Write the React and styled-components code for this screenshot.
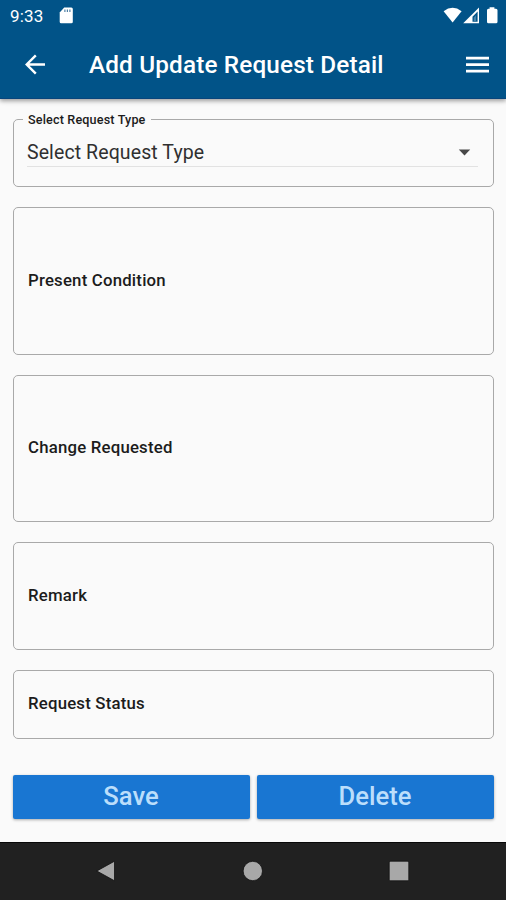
import React from "react";
import styled, { createGlobalStyle } from "styled-components";

const GlobalStyle = createGlobalStyle`
  * { box-sizing: border-box; }
  body { margin: 0; background: #fafafa; font-family: Roboto, "Liberation Sans", sans-serif; }
`;

const Screen = styled.div`
  display: flex;
  flex-direction: column;
  width: 506px;
  height: 900px;
  background: #fafafa;
  overflow: hidden;
`;

const Header = styled.header`
  flex: none;
  height: 99px;
  background: #015388;
  color: #fff;
  border-bottom: 1px solid #08457c;
  box-shadow: 0 2px 4px rgba(0, 0, 0, 0.3), 0 1px 7px rgba(0, 0, 0, 0.12);
`;

const StatusBar = styled.div`
  display: flex;
  align-items: center;
  height: 32px;
  padding: 0 7px 0 10px;
`;

const Clock = styled.span`
  width: 49px;
  font-size: 17px;
  line-height: 32px;
  letter-spacing: 0.15px;
`;

const StatusIcons = styled.div`
  display: flex;
  align-items: center;
  margin-left: auto;
`;

const AppBar = styled.div`
  display: flex;
  align-items: center;
  height: 66px;
  padding: 0 17px 0 24px;
`;

const Title = styled.h1`
  flex: 1;
  margin: 0 0 0 44px;
  font-size: 24.3px;
  font-weight: 500;
  line-height: 32px;
  letter-spacing: 0.16px;
  white-space: nowrap;
`;

const IconButton = styled.button`
  display: flex;
  padding: 0;
  border: 0;
  background: none;
  color: inherit;
`;

const Icon = styled.svg`
  display: block;
  flex: none;
`;

const Form = styled.main`
  flex: 1;
  display: flex;
  flex-direction: column;
  gap: 20px;
  padding: 19px 12px 0 13px;
`;

const Field = styled.div`
  display: flex;
  align-items: center;
  height: ${(p) => p.$height}px;
  padding: 0 14px 3px;
  border: 1px solid #a9a9a9;
  border-radius: 5px;
`;

const FieldLabel = styled.label`
  color: #1c1c1c;
  font-size: 16.8px;
  font-weight: 500;
  line-height: 22px;
  letter-spacing: 0.2px;
`;

const SelectField = styled.fieldset`
  height: 75px;
  min-width: 0;
  margin: -6px 0 0;
  padding: 0 15px 0 13px;
  border: 1px solid #a9a9a9;
  border-radius: 5px;
`;

const Legend = styled.legend`
  margin-left: -4px;
  padding: 1px 5px 0 5px;
  color: #1c1c1c;
  font-size: 12.6px;
  font-weight: 500;
  line-height: 13px;
  letter-spacing: 0.16px;
`;

const SelectRow = styled.div`
  display: flex;
  align-items: center;
  justify-content: space-between;
  height: 34px;
  margin: 7px 0 0;
  padding: 5px 7px 0 0;
  border-bottom: 1px solid #e2e2e2;
`;

const SelectValue = styled.span`
  color: #303030;
  font-size: 19.5px;
  line-height: 26px;
  padding-top: 1px;
  letter-spacing: 0.1px;
`;

const Actions = styled.div`
  display: flex;
  gap: 7px;
  margin-top: 16px;
`;

const ActionButton = styled.button`
  flex: 1;
  height: 44px;
  padding: 0 1px 2px 0;
  border: 0;
  border-radius: 2px;
  background: #1976d2;
  box-shadow: 0 1px 3px rgba(0, 0, 0, 0.32);
  color: #bbdefb;
  font: 500 25.6px/32px Roboto, "Liberation Sans", sans-serif;
`;

const NavBar = styled.nav`
  flex: none;
  display: flex;
  align-items: center;
  justify-content: space-between;
  height: 58px;
  padding: 0 96px 1px 96px;
  background: #212121;
  border-top: 1px solid #080808;
`;

const fields = [
  { label: "Present Condition", height: 148 },
  { label: "Change Requested", height: 147 },
  { label: "Remark", height: 108 },
  { label: "Request Status", height: 69 },
];

export default function App() {
  return (
    <Screen>
      <GlobalStyle />
      <Header>
        <StatusBar>
          <Clock>9:33</Clock>
          <Icon width="15" height="18" viewBox="0 0 15 18">
            <path d="M5.2 .6H12.3Q13.8 .6 13.8 2.1V14.7Q13.8 16.2 12.3 16.2H2.2Q.7 16.2 .7 14.7V5.4Z" fill="#fff" />
            <path d="M5.9 2.6V5M8.4 2.6V5M10.9 2.6V5" stroke="#4f80a5" strokeWidth="1.2" />
          </Icon>
          <StatusIcons>
            <Icon width="56" height="18" viewBox="0 0 56 18">
              <path d="M.6 4.2Q9.6-2.6 18.6 4.2L9.6 15.4Z" fill="#fff" />
              <path d="M36 .6V16.2H20.2Z" fill="#fff" />
              <path d="M34.6 4.6V14.8H29.5V9.8Z" fill="#015388" />
              <path d="M33 8.3V14H30.8V10.8Z" fill="#c9d9e5" opacity=".35" />
              <path d="M46.6 .2H51.4V1.7H53Q54.5 1.7 54.5 3.2V14.7Q54.5 16.2 53 16.2H45.4Q44 16.2 44 14.7V3.2Q44 1.7 45.4 1.7H46.6Z" fill="#fff" />
            </Icon>
          </StatusIcons>
        </StatusBar>
        <AppBar>
          <IconButton aria-label="Back">
            <Icon width="21" height="22" viewBox="0 0 21 22" fill="none" stroke="#fff" strokeWidth="2.4">
              <path d="M21 10.5H3.4M11.8 1.3L2.7 10.5L11.8 19.7" />
            </Icon>
          </IconButton>
          <Title>Add Update Request Detail</Title>
          <IconButton aria-label="Menu">
            <Icon width="23" height="18" viewBox="0 0 23 18" fill="none" stroke="#fff" strokeWidth="2.7">
              <path d="M0 2.2H23M0 8.7H23M0 15.2H23" />
            </Icon>
          </IconButton>
        </AppBar>
      </Header>
      <Form>
        <SelectField>
          <Legend>Select Request Type</Legend>
          <SelectRow>
            <SelectValue>Select Request Type</SelectValue>
            <Icon width="13" height="7" viewBox="0 0 13 7">
              <path d="M.8 .5H12.2L6.5 6.4Z" fill="#484848" />
            </Icon>
          </SelectRow>
        </SelectField>
        {fields.map((f) => (
          <Field key={f.label} $height={f.height}>
            <FieldLabel>{f.label}</FieldLabel>
          </Field>
        ))}
        <Actions>
          <ActionButton>Save</ActionButton>
          <ActionButton>Delete</ActionButton>
        </Actions>
      </Form>
      <NavBar>
        <Icon width="20" height="22" viewBox="0 0 20 22">
          <path d="M18.5 1.2V20.8L.8 11Z" fill="#a8a8a8" stroke="#111" strokeWidth=".8" />
        </Icon>
        <Icon width="22" height="22" viewBox="0 0 22 22">
          <circle cx="11.8" cy="11" r="9.7" fill="#a8a8a8" stroke="#111" strokeWidth=".8" />
        </Icon>
        <Icon width="22" height="22" viewBox="0 0 22 22">
          <rect x="1.2" y="1.2" width="19.6" height="19.6" rx="1.5" fill="#a8a8a8" stroke="#111" strokeWidth=".8" />
        </Icon>
      </NavBar>
    </Screen>
  );
}
